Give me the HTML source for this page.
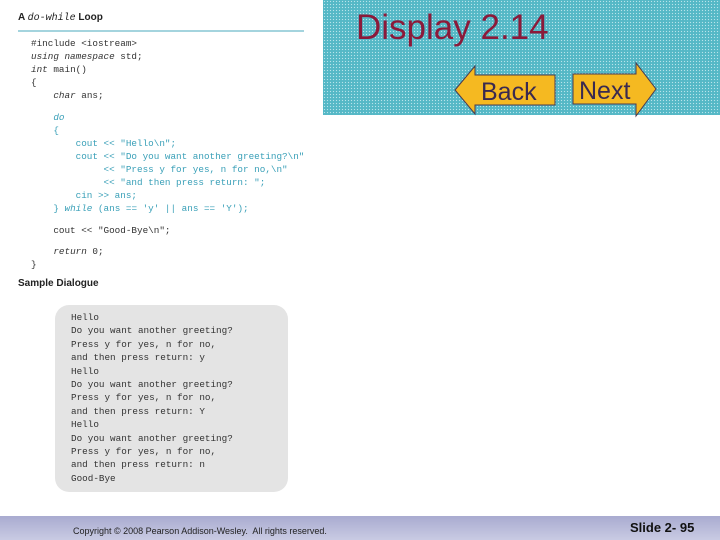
<!DOCTYPE html>
<html><head><style>
body{margin:0;width:720px;height:540px;background:#fff;position:relative;overflow:hidden;font-family:"Liberation Sans",sans-serif}
.teal{position:absolute;left:323px;top:0;width:397px;height:115px;background:#55b8c6;
background-image:radial-gradient(circle,#b8e4ea 0.7px,transparent 0.8px);background-size:3px 3px}
.code{position:absolute;font-family:"Liberation Mono",monospace;font-size:9.3px;white-space:pre;line-height:13px}
.k{color:#333}.b{color:#3aa0b8}
i{font-style:italic}
</style></head><body>
<div class="teal"></div>
<div style="position:absolute;left:356px;top:8px;font-size:35px;color:#8b1a3a">Display 2.14</div>
<svg style="position:absolute;left:0;top:0" width="720" height="540">
<polygon points="455,90 475,66 475,75 555,75 555,105 475,105 475,114" fill="#f5b921" stroke="#4a3a50" stroke-width="1"/>
<polygon points="573,74 636,74 636,63 656,89 636,116 636,104 573,104" fill="#f5b921" stroke="#4a3a50" stroke-width="1"/>
<text x="481" y="100" font-family="Liberation Sans" font-size="25" fill="#3a2a50">Back</text>
<text x="579" y="99" font-family="Liberation Sans" font-size="25" fill="#3a2a50">Next</text>
<line x1="18" y1="31" x2="304" y2="31" stroke="#4aa8bd" stroke-width="1"/>
</svg>
<div style="position:absolute;left:18px;top:12px;font-size:10px;font-weight:bold;color:#222">A <i style="font-family:'Liberation Mono',monospace;font-weight:normal">do-while</i> Loop</div>
<div class="code k" style="left:31px;top:37px">#include &lt;iostream&gt;
<i>using namespace</i> std;
<i>int</i> main()
{
    <i>char</i> ans;</div>
<div class="code b" style="left:31px;top:111px">    <i>do</i>
    {
        cout &lt;&lt; "Hello\n";
        cout &lt;&lt; "Do you want another greeting?\n"
             &lt;&lt; "Press y for yes, n for no,\n"
             &lt;&lt; "and then press return: ";
        cin &gt;&gt; ans;
    } <i>while</i> (ans == 'y' || ans == 'Y');</div>
<div class="code k" style="left:31px;top:224px">    cout &lt;&lt; "Good-Bye\n";</div>
<div class="code k" style="left:31px;top:245px">    <i>return</i> 0;
}</div>
<div style="position:absolute;left:18px;top:278px;font-size:10px;font-weight:bold;color:#222">Sample Dialogue</div>
<div style="position:absolute;left:55px;top:305px;width:233px;height:187px;background:#e4e4e4;border-radius:14px"></div>
<div class="code" style="left:71px;top:311px;font-size:9.3px;line-height:13.4px;color:#333">Hello
Do you want another greeting?
Press y for yes, n for no,
and then press return: y
Hello
Do you want another greeting?
Press y for yes, n for no,
and then press return: Y
Hello
Do you want another greeting?
Press y for yes, n for no,
and then press return: n
Good-Bye</div>
<div style="position:absolute;left:0;top:516px;width:720px;height:24px;background:linear-gradient(#a9abd0,#c9cbe3)"></div>
<div style="position:absolute;left:73px;top:526px;font-size:9px;color:#222">Copyright © 2008 Pearson Addison-Wesley.&nbsp; All rights reserved.</div>
<div style="position:absolute;left:630px;top:520px;font-size:13px;font-weight:bold;color:#111">Slide 2- 95</div>
</body></html>
